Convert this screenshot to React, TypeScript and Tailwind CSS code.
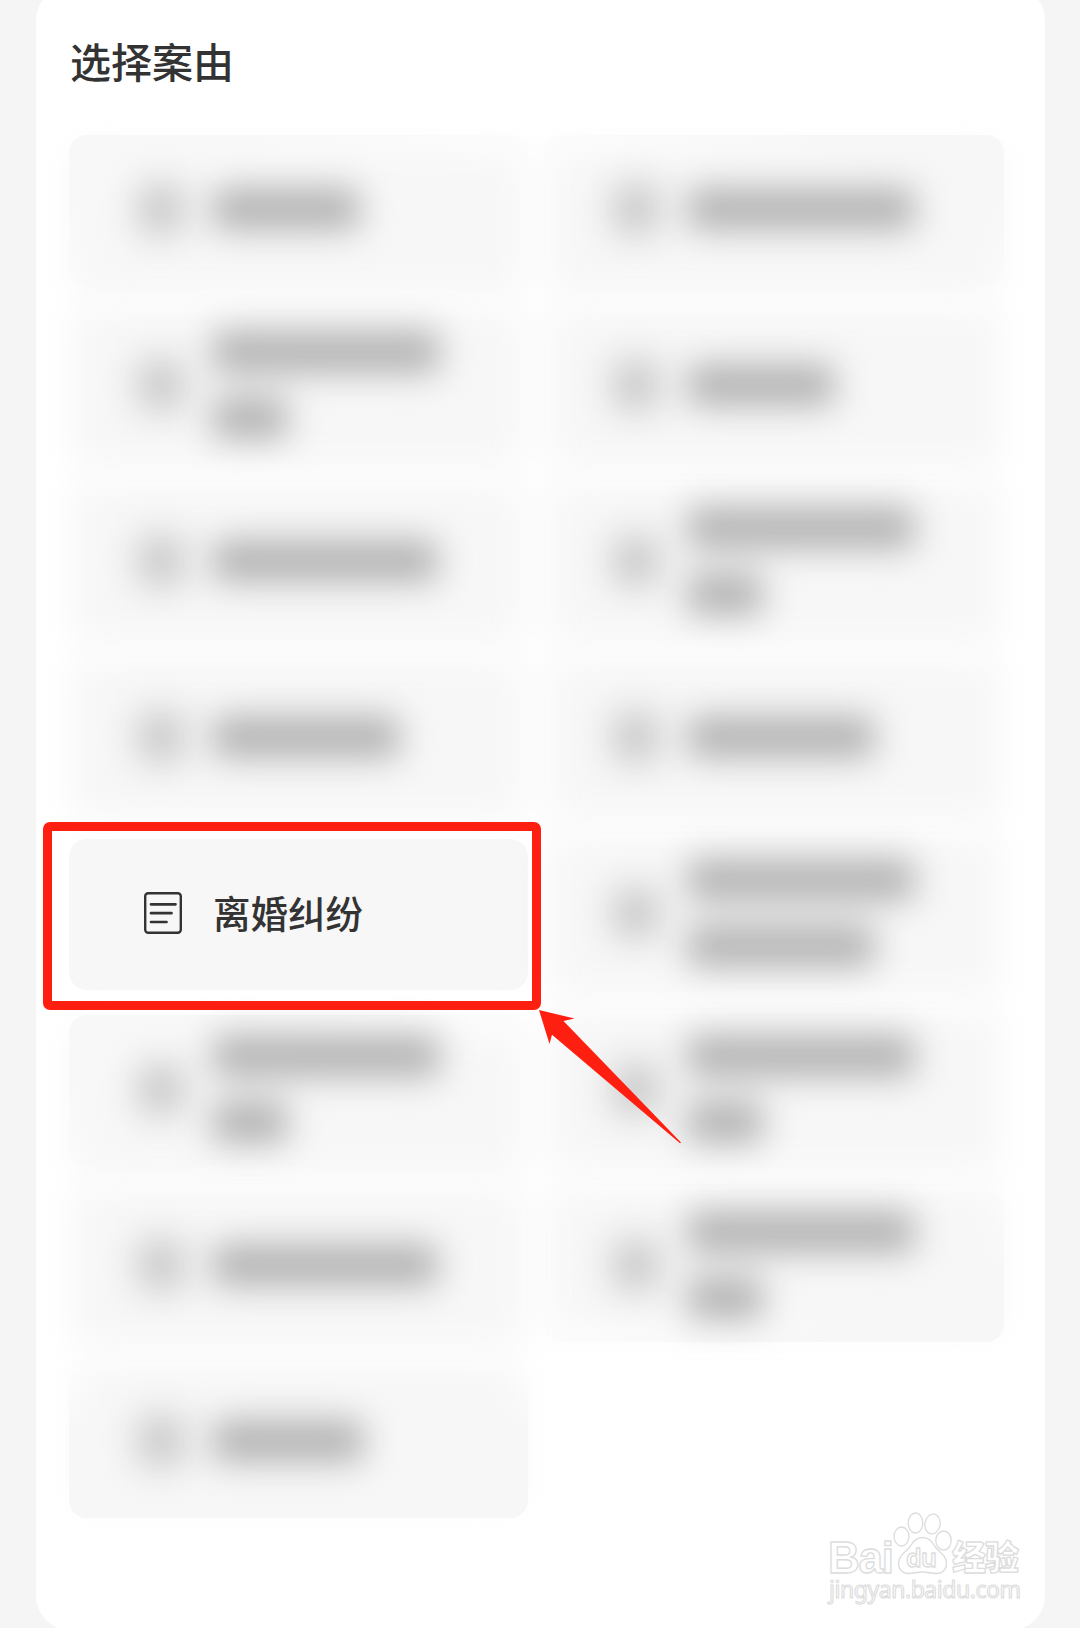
import React from 'react';
import clsx from 'clsx';

type Surface = 'soft' | 'topLeft' | 'topRight' | 'bottom' | 'bottomRight' | 'solid';

interface CauseItem {
  label?: string;
  // widths of the obscured text lines
  lines?: string[];
  surface?: Surface;
}

const CAUSES: CauseItem[] = [
  { lines: ['w-[148px]'], surface: 'topLeft' },
  { lines: ['w-[228px]'], surface: 'topRight' },
  { lines: ['w-[228px]', 'w-[76px]'] },
  { lines: ['w-[148px]'] },
  { lines: ['w-[226px]'] },
  { lines: ['w-[228px]', 'w-[76px]'] },
  { lines: ['w-[188px]'] },
  { lines: ['w-[188px]'] },
  { label: '离婚纠纷', surface: 'solid' },
  { lines: ['w-[228px]', 'w-[188px]'] },
  { lines: ['w-[228px]', 'w-[76px]'], surface: 'topLeft' },
  { lines: ['w-[228px]', 'w-[76px]'] },
  { lines: ['w-[226px]'] },
  { lines: ['w-[228px]', 'w-[76px]'], surface: 'bottomRight' },
  { lines: ['w-[152px]'], surface: 'bottom' },
];

// the crisp part of each card, fading out over the blurred base
const SURFACES: Record<Surface, string> = {
  soft: '',
  topLeft: 'bg-linear-to-br from-[#f8f8f8] from-20% to-transparent to-60%',
  topRight: 'bg-linear-to-bl from-[#f7f7f7] from-20% to-transparent to-60%',
  bottom: 'bg-linear-to-t from-[#f7f7f7] from-55% to-transparent',
  bottomRight: 'bg-linear-to-tl from-[#f7f7f7] from-20% to-transparent to-60%',
  solid: 'bg-[#f7f7f7]',
};

const BASES: Record<Surface, string> = {
  soft: 'inset-x-[3px] -inset-y-[5px]',
  topLeft: 'inset-x-[3px] top-[14px] -bottom-[8px]',
  topRight: 'inset-x-[3px] top-[14px] -bottom-[8px]',
  bottom: 'inset-x-[8px] -top-[4px] bottom-[16px]',
  bottomRight: 'inset-x-[4px] -top-[4px] bottom-[12px]',
  solid: 'hidden',
};

const DocumentIcon: React.FC = () => (
  <svg width="38" height="42" viewBox="0 0 38 42" fill="none" stroke="#333" strokeWidth="2.4">
    <rect x="1.2" y="1.2" width="35.6" height="39.6" rx="3" />
    <path d="M7 12.3h24.500M7 21.200h20.500M7 30h15.500" strokeWidth="2.700" strokeLinecap="round" />
  </svg>
);

const CauseCard: React.FC<{ item: CauseItem }> = ({ item }) => {
  const surface = item.surface ?? 'soft';

  return (
    <div className="relative h-[151px]">
      <div className={clsx('absolute rounded-[18px] bg-[#f7f7f7] blur-[17px]', BASES[surface])} />
      <div className={clsx('absolute inset-0 rounded-[18px]', SURFACES[surface])} />
      <div className="relative flex h-full items-center pb-[4px] pl-[75px]">
        {item.label ? (
          <>
            <DocumentIcon />
            <span className="-mt-[2px] ml-[31px] text-[37.500px] leading-none font-medium text-[#333]">
              {item.label}
            </span>
          </>
        ) : (
          <>
            <div className="-ml-[6px] h-[52px] w-[46px] rounded-[16px] bg-[#c6c6c6] blur-[18px]" />
            <div className="ml-[28px] flex flex-col gap-[24px] blur-[17px]">
              {item.lines?.map((width, i) => (
                <div key={i} className={clsx('h-[42px] rounded-[10px] bg-[#b2b2b2]', width)} />
              ))}
            </div>
          </>
        )}
      </div>
    </div>
  );
};

const Arrow: React.FC = () => (
  <svg className="absolute top-[1010px] left-[539px]" width="144" height="135" viewBox="0 0 144 135">
    <path d="M0 0 35.500 8.500 24.500 11 142 132.500 141 133.200 13 24.800 10.500 34Z" fill="#ff1f10" />
  </svg>
);

const Watermark: React.FC = () => (
  <svg
    className="absolute top-[1506px] left-[824px]"
    width="204"
    height="104"
    viewBox="0 0 204 104"
    fill="#fff"
    stroke="#dcdcdc"
    strokeWidth="1.300"
    strokeLinejoin="round"
  >
    <text x="4" y="66.500" fontSize="44" fontWeight="700" fontFamily="Liberation Sans, sans-serif" textLength="66">
      Bai
    </text>
    <ellipse cx="77.500" cy="30.500" rx="7.500" ry="9.500" />
    <ellipse cx="91.500" cy="17" rx="7.300" ry="10" />
    <ellipse cx="108.500" cy="18" rx="7.600" ry="10" transform="rotate(10 108.500 18)" />
    <ellipse cx="119.500" cy="34.500" rx="7.700" ry="9.500" />
    <path d="M98.500 31.500c-8 0-10 6-14 11-5 5-10 8-10 15 0 6 4 10 10 10 5 0 9-1.500 14-1.500s9 1.500 14 1.500c6 0 10-4 10-10 0-7-5-10-10-15-4-5-6-11-14-11Z" />
    <text x="82" y="61" fontSize="25" fontWeight="600" fontFamily="Noto Sans, sans-serif" textLength="31">
      du
    </text>
    <text x="128" y="64" fontSize="34" fontWeight="900" fontFamily="Noto Sans CJK SC, sans-serif" textLength="67">
      经验
    </text>
    <text x="5" y="92" fontSize="23" fontFamily="Noto Sans, sans-serif" textLength="192" strokeWidth="1.100">
      jingyan.baidu.com
    </text>
  </svg>
);

const App: React.FC = () => {
  return (
    <div className="relative h-[1628px] w-[1080px] overflow-hidden bg-[#f5f5f5] font-['Noto_Sans_CJK_SC',sans-serif]">
      <main className="-mt-[14px] ml-[36px] h-[1644px] w-[1009px] rounded-[34px] bg-white px-[33px] pt-[54px]">
        <h1 className="h-[95px] pl-[1px] text-[41px] leading-[41px] font-medium text-[#333]">选择案由</h1>
        <div className="grid w-[935px] grid-cols-[459px_460px] gap-x-[16px] gap-y-[25px]">
          {CAUSES.map((item, i) => (
            <CauseCard key={i} item={item} />
          ))}
        </div>
      </main>

      <div className="absolute top-[822px] left-[43px] h-[188px] w-[498px] rounded-[7px] border-[9px] border-[#ff1f10]" />
      <Arrow />
      <Watermark />
    </div>
  );
};

export default App;
